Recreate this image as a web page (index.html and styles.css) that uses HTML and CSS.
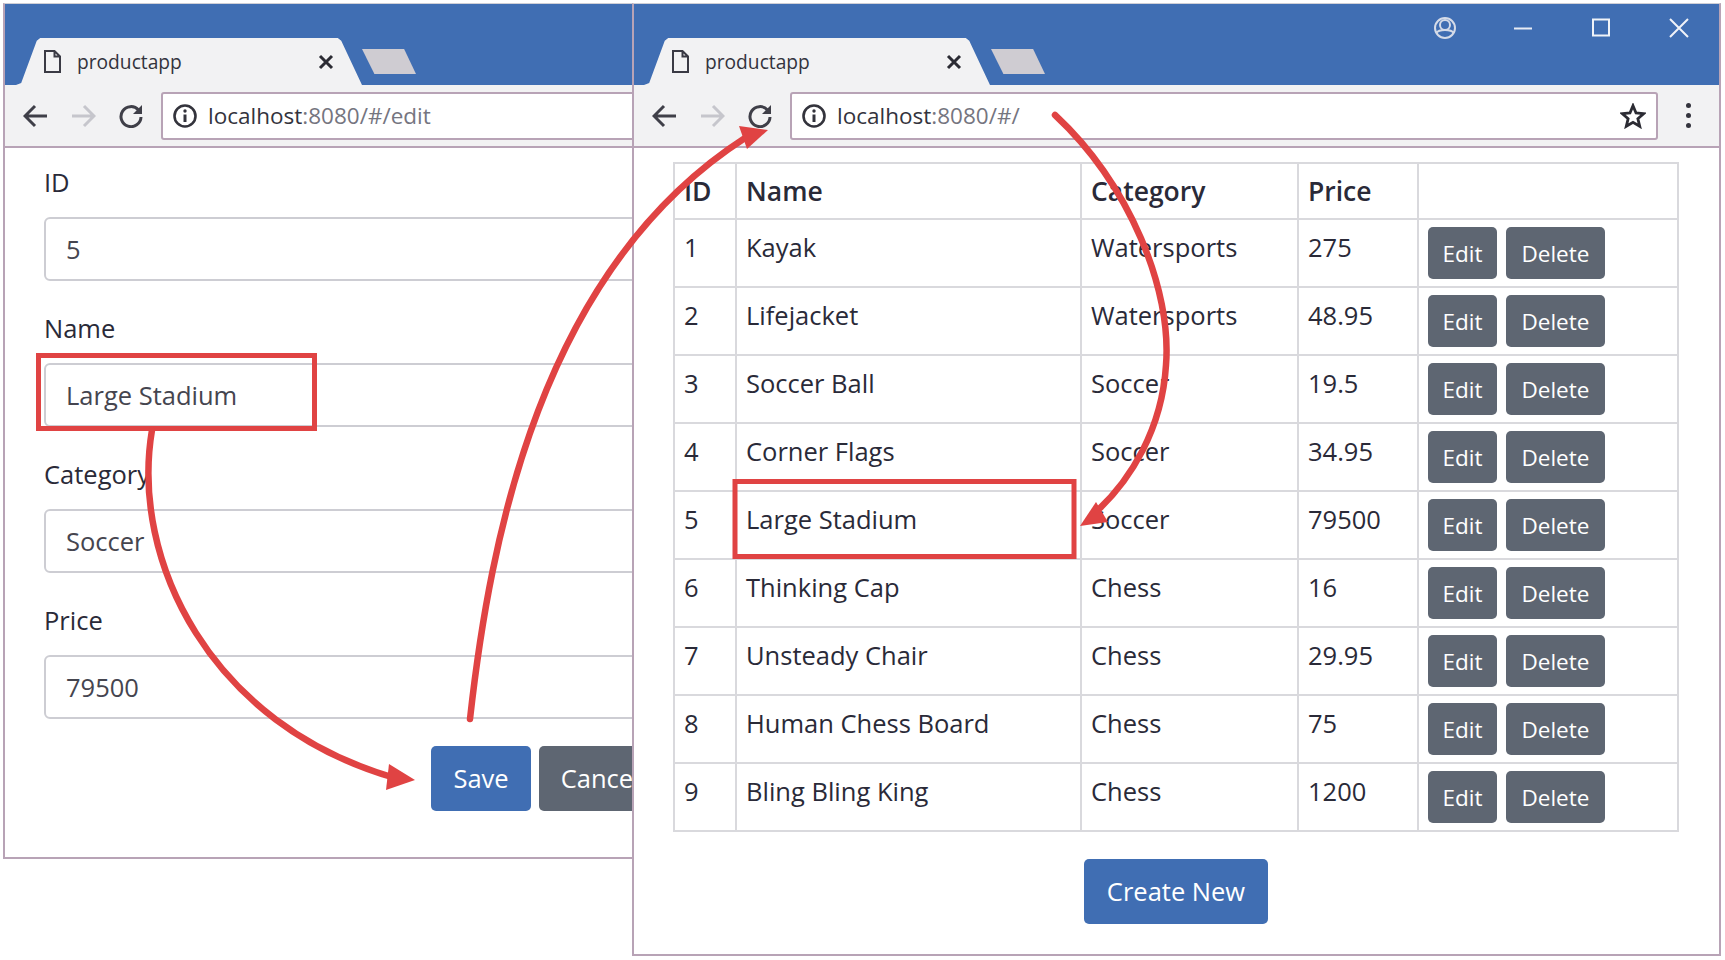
FILE: index.html
```html
<!DOCTYPE html>
<html>
<head>
	<meta charset="utf-8">
	<title>productapp</title>
	<link rel="stylesheet" href="styles.css">
</head>
<body>
	<svg width="0" height="0" class="defs">
		<symbol id="page" viewBox="0 0 17 23"><path d="M1 1H10.500L16 6.500V22H1Z M10.500 1V6.500H16" fill="none" stroke="#3a3a44" stroke-width="2"/></symbol>
		<symbol id="close" viewBox="0 0 16 16"><path d="M2 2L14 14M14 2L2 14" stroke="#2b2b33" stroke-width="3"/></symbol>
		<symbol id="arrow" viewBox="0 0 24 24"><path d="M24 12H2M12 2L2 12L12 22" fill="none" stroke="currentColor" stroke-width="3"/></symbol>
		<symbol id="reload" viewBox="0 0 24 24"><path d="M19.5 6A10 10 0 1 0 22 13" fill="none" stroke="#3f3f48" stroke-width="3"/><path d="M23 1V10H14Z" fill="#3f3f48"/></symbol>
		<symbol id="info" viewBox="0 0 24 24"><circle cx="12" cy="12" r="10.5" fill="none" stroke="#33333c" stroke-width="2.6"/><path d="M12 10.500V18" stroke="#33333c" stroke-width="3"/><circle cx="12" cy="7" r="1.700" fill="#33333c"/></symbol>
	</svg>

	<div class="window window-back">
		<div class="tabstrip">
			<div class="tab">
				<svg class="tab-icon"><use href="#page"/></svg>
				<span class="tab-title">productapp</span>
				<svg class="tab-close"><use href="#close"/></svg>
			</div>
			<div class="newtab"></div>
		</div>
		<div class="toolbar">
			<svg class="nav"><use href="#arrow"/></svg>
			<svg class="nav nav-off flip"><use href="#arrow"/></svg>
			<svg class="nav"><use href="#reload"/></svg>
			<div class="address">
				<svg class="info"><use href="#info"/></svg>
				<span class="host">localhost</span><span class="rest">:8080/#/edit</span>
			</div>
		</div>
		<form class="edit-form">
			<div class="form-group"><label>ID</label><div class="input">5</div></div>
			<div class="form-group"><label>Name</label><div class="input">Large Stadium</div></div>
			<div class="form-group"><label>Category</label><div class="input">Soccer</div></div>
			<div class="form-group"><label>Price</label><div class="input">79500</div></div>
			<div class="form-actions">
				<span class="btn btn-primary">Save</span>
				<span class="btn btn-secondary">Cancel</span>
			</div>
		</form>
	</div>

	<div class="window window-front">
		<div class="tabstrip">
			<div class="tab">
				<svg class="tab-icon"><use href="#page"/></svg>
				<span class="tab-title">productapp</span>
				<svg class="tab-close"><use href="#close"/></svg>
			</div>
			<div class="newtab"></div>
			<div class="controls">
				<svg viewBox="0 0 24 24" class="ctl"><circle cx="12" cy="12" r="10" fill="none" stroke="#d5dbe8" stroke-width="2"/><circle cx="12" cy="9" r="5" fill="none" stroke="#d5dbe8" stroke-width="2"/><path d="M3 17C6 13 18 13 21 17" fill="none" stroke="#d5dbe8" stroke-width="2"/></svg>
				<svg viewBox="0 0 24 24" class="ctl"><path d="M3 12.500H21" stroke="#e8ecf4" stroke-width="2"/></svg>
				<svg viewBox="0 0 24 24" class="ctl"><rect x="4" y="3.500" width="16" height="16" fill="none" stroke="#f0f3f8" stroke-width="2"/></svg>
				<svg viewBox="0 0 24 24" class="ctl"><path d="M3 3L21 21M21 3L3 21" stroke="#f0f3f8" stroke-width="2"/></svg>
			</div>
		</div>
		<div class="toolbar">
			<svg class="nav"><use href="#arrow"/></svg>
			<svg class="nav nav-off flip"><use href="#arrow"/></svg>
			<svg class="nav"><use href="#reload"/></svg>
			<div class="address">
				<svg class="info"><use href="#info"/></svg>
				<span class="host">localhost</span><span class="rest">:8080/#/</span>
				<svg class="star" viewBox="0 0 24 24"><path d="M12 2.500L14.800 9.200L22 9.800L16.500 14.500L18.200 21.500L12 17.800L5.800 21.500L7.500 14.500L2 9.800L9.200 9.200Z" fill="none" stroke="#2b2b33" stroke-width="2.6"/></svg>
			</div>
			<div class="menu"><i></i><i></i><i></i></div>
		</div>
		<div class="content">
			<table class="products">
				<thead>
					<tr><th class="col-id">ID</th><th class="col-name">Name</th><th class="col-cat">Category</th><th class="col-price">Price</th><th></th></tr>
				</thead>
				<tbody>
					<tr><td>1</td><td>Kayak</td><td>Watersports</td><td>275</td><td class="actions"><span class="btn btn-small btn-secondary">Edit</span><span class="btn btn-small btn-secondary">Delete</span></td></tr>
					<tr><td>2</td><td>Lifejacket</td><td>Watersports</td><td>48.95</td><td class="actions"><span class="btn btn-small btn-secondary">Edit</span><span class="btn btn-small btn-secondary">Delete</span></td></tr>
					<tr><td>3</td><td>Soccer Ball</td><td>Soccer</td><td>19.5</td><td class="actions"><span class="btn btn-small btn-secondary">Edit</span><span class="btn btn-small btn-secondary">Delete</span></td></tr>
					<tr><td>4</td><td>Corner Flags</td><td>Soccer</td><td>34.95</td><td class="actions"><span class="btn btn-small btn-secondary">Edit</span><span class="btn btn-small btn-secondary">Delete</span></td></tr>
					<tr><td>5</td><td>Large Stadium</td><td>Soccer</td><td>79500</td><td class="actions"><span class="btn btn-small btn-secondary">Edit</span><span class="btn btn-small btn-secondary">Delete</span></td></tr>
					<tr><td>6</td><td>Thinking Cap</td><td>Chess</td><td>16</td><td class="actions"><span class="btn btn-small btn-secondary">Edit</span><span class="btn btn-small btn-secondary">Delete</span></td></tr>
					<tr><td>7</td><td>Unsteady Chair</td><td>Chess</td><td>29.95</td><td class="actions"><span class="btn btn-small btn-secondary">Edit</span><span class="btn btn-small btn-secondary">Delete</span></td></tr>
					<tr><td>8</td><td>Human Chess Board</td><td>Chess</td><td>75</td><td class="actions"><span class="btn btn-small btn-secondary">Edit</span><span class="btn btn-small btn-secondary">Delete</span></td></tr>
					<tr><td>9</td><td>Bling Bling King</td><td>Chess</td><td>1200</td><td class="actions"><span class="btn btn-small btn-secondary">Edit</span><span class="btn btn-small btn-secondary">Delete</span></td></tr>
				</tbody>
			</table>
			<div class="create-row"><span class="btn btn-primary btn-create">Create New</span></div>
		</div>
	</div>

	<!-- red callouts drawn over both windows -->
	<svg class="callouts" width="1725" height="960" viewBox="0 0 1725 960">
		<rect x="38.500" y="355.500" width="276" height="73" class="box"/>
		<rect x="735" y="481.500" width="339" height="75" class="box"/>
		<path d="M152 430C130 560 210 725 395 778" class="line"/>
		<path d="M415 780L389 764L386 790Z" class="head"/>
		<path d="M470 719C490 540 540 270 745 138" class="line"/>
		<path d="M768 130L739 126L747 149Z" class="head"/>
		<path d="M1055 115C1130 185 1172 290 1166 365C1162 430 1130 480 1098 510" class="line"/>
		<path d="M1080 526L1096 502L1108 522Z" class="head"/>
	</svg>
</body>
</html>
```
FILE: styles.css
```css
html, body {
	margin: 0;
	height: 100%;
	overflow: hidden;
	background: #fff;
}

body {
	font-family: "Open Sans", "Noto Sans", sans-serif;
	color: #2a2a38;
}

.defs {
	position: absolute;
}

.window {
	position: absolute;
	top: 3px;
	box-sizing: border-box;
	background: #fff;
	border: 2px solid #b8a3b6;
	border-top: 1px solid #cfcfd6;
	overflow: hidden;
}

.window-back {
	left: 3px;
	width: 1089px;
	height: 856px;
}

.window-front {
	left: 632px;
	width: 1089px;
	height: 953px;
}

.tabstrip {
	display: flex;
	height: 81px;
	background: #406eb3;
}

.tab {
	display: flex;
	align-items: center;
	align-self: flex-end;
	box-sizing: border-box;
	width: 346px;
	height: 47px;
	margin-left: 11px;
	padding: 0 28px;
	background: #f2f2f3;
	clip-path: polygon(0 100%, 1.500% 96%, 6% 6%, 7% 0, 93% 0, 94% 6%, 100% 100%);
}

.window-front .tab {
	margin-left: 10px;
}

.window-front .newtab {
	margin-left: 1px;
}

.tab-icon {
	width: 17px;
	height: 23px;
	flex: none;
}

.tab-title {
	margin-left: 16px;
	font-size: 19.2px;
	color: #33333d;
}

.tab-close {
	width: 16px;
	height: 16px;
	margin-left: auto;
}

.newtab {
	align-self: flex-start;
	width: 54px;
	height: 25px;
	margin-top: 45px;
	background: #cfccd2;
	clip-path: polygon(0 0, 78% 0, 100% 100%, 23% 100%);
}

.controls {
	display: flex;
	margin-left: auto;
	margin-right: 1px;
}

.ctl {
	width: 24px;
	height: 24px;
	padding: 12px 27px;
}

.toolbar {
	display: flex;
	align-items: center;
	box-sizing: border-box;
	height: 63px;
	padding: 0 0 0 20px;
	background: #f2f2f3;
	border-bottom: 2px solid #b8a3b6;
}

.nav {
	width: 24px;
	height: 24px;
	margin-right: 23px;
	color: #3f3f48;
	flex: none;
}

.nav:first-child {
	margin-left: -2px;
	margin-right: 25px;
}

.nav-off {
	color: #c6c6cc;
}

.flip {
	transform: scaleX(-1);
}

.address {
	display: flex;
	align-items: center;
	box-sizing: border-box;
	flex: 1;
	height: 48px;
	margin-left: -5px;
	padding-left: 10px;
	background: #fff;
	border: 2px solid #b8a3b6;
	border-radius: 3px;
	font-size: 22.5px;
}

.info {
	width: 24px;
	height: 24px;
	margin-right: 11px;
}

.host {
	color: #33333d;
}

.rest {
	color: #75757f;
}

.star {
	width: 26px;
	height: 26px;
	margin-left: auto;
	margin-right: 10px;
}

.menu {
	display: flex;
	flex-direction: column;
	gap: 5px;
	width: 61px;
	align-items: center;
}

.menu i {
	width: 5px;
	height: 5px;
	border-radius: 50%;
	background: #33333d;
}

.edit-form {
	padding: 14px 41px 0 39px;
}

.form-group {
	margin-bottom: 27px;
}

.form-group label {
	display: block;
	padding-top: 2px;
	margin-bottom: 17px;
	font-size: 25.5px;
	line-height: 36px;
}

.input {
	box-sizing: border-box;
	height: 64px;
	padding: 0 20px;
	border: 2px solid #cdcdd3;
	border-radius: 6px;
	font-size: 25.5px;
	line-height: 60px;
	color: #45454f;
}

.form-actions {
	display: flex;
	justify-content: center;
	gap: 8px;
	margin-top: 1px;
}

.btn {
	display: inline-block;
	box-sizing: border-box;
	height: 65px;
	padding: 0 22px;
	border-radius: 5px;
	color: #fff;
	font-size: 25.5px;
	line-height: 65px;
}

.btn-primary {
	background: #406eb3;
}

.btn-secondary {
	background: #5e6672;
}

.btn-small {
	height: 52px;
	padding: 0 15.5px;
	font-size: 22.5px;
	line-height: 53px;
}

.btn-small:first-child {
	padding: 0 14.5px;
}

.btn-small + .btn-small {
	margin-left: 9px;
}

.btn-create {
	height: 65px;
	padding: 0 23px;
}

.content {
	padding: 14px 0 0 39px;
}

.products {
	table-layout: fixed;
	width: 1006px;
	border-collapse: collapse;
	font-size: 25.5px;
}

.products th,
.products td {
	box-sizing: border-box;
	padding: 9px 9px 0;
	border: 2px solid #d9d9dd;
	text-align: left;
	vertical-align: top;
	line-height: 36px;
}

.products th {
	height: 56px;
	padding-top: 9px;
	font-size: 26.5px;
	font-weight: 600;
}

.products td {
	height: 68px;
}

.products td.actions {
	padding: 7px 0 0 9px;
	white-space: nowrap;
}

.col-id {
	width: 62px;
}

.col-name {
	width: 345px;
}

.col-cat {
	width: 217px;
}

.col-price {
	width: 120px;
}

.create-row {
	display: flex;
	justify-content: center;
	width: 1006px;
	margin-top: 27px;
}

.callouts {
	position: absolute;
	top: 0;
	left: 0;
	pointer-events: none;
}

.box {
	fill: none;
	stroke: #e04343;
	stroke-width: 5;
}

.line {
	fill: none;
	stroke: #e04343;
	stroke-width: 6.5;
	stroke-linecap: round;
}

.head {
	fill: #e04343;
}
```
